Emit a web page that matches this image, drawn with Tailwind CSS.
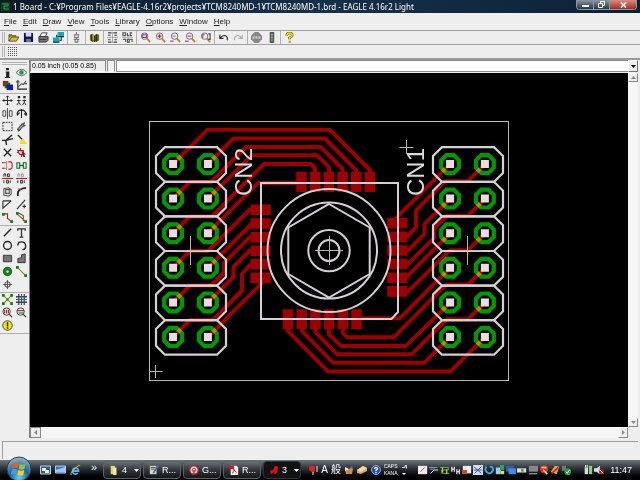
<!DOCTYPE html>
<html lang="en">
<head>
  <meta charset="UTF-8">
  <title>1 Board - EAGLE 4.16r2 Light</title>
  <script src="https://cdn.jsdelivr.net/npm/@tailwindcss/browser@4"></script>
</head>
<body class="h-screen flex flex-col overflow-hidden bg-[#eeeeee] text-black font-['Liberation_Sans','Noto_Sans_CJK_JP',sans-serif] text-[8px] leading-[10px]">

  <!-- Title bar -->
  <header class="h-[13px] shrink-0 flex items-center bg-linear-to-r from-[#0b1a28] via-[#16304a] to-[#0d2134] text-white pl-px pr-[3px]">
    <svg class="w-[9px] h-[9px] mr-[3px]" viewBox="0 0 9 9"><path fill="#0b3d1c" d="M0 0h9v9H0z"/><path fill="none" stroke="#2fa04a" d="M1 2h6v2H3v3h5"/></svg>
    <h1 class="flex-1 whitespace-nowrap font-['Noto_Sans','Noto_Sans_CJK_JP',sans-serif] text-[8px] leading-[12px]">1 Board - C:¥Program Files¥EAGLE-4.16r2¥projects¥TCM8240MD-1¥TCM8240MD-1.brd - EAGLE 4.16r2 Light</h1>
    <div class="flex self-start h-[10px] rounded-b-sm overflow-hidden border border-t-0 border-[#8d99a5]">
      <button aria-label="Minimize" class="w-4 bg-linear-to-b from-[#8b97a4] to-[#26384a] flex items-center justify-center"><span class="w-[7px] h-[2px] mt-[3px] bg-white"></span></button>
      <button aria-label="Restore" class="w-4 border-l border-[#8d99a5] bg-linear-to-b from-[#8b97a4] to-[#26384a] flex items-center justify-center"><svg class="w-[7px] h-[7px]" viewBox="0 0 7 7"><path fill="none" stroke="#fff" d="M2.500 2V.5h4v4H5M.5 2.500h4v4h-4z"/></svg></button>
      <button aria-label="Close" class="w-[27px] border-l border-[#8d99a5] bg-linear-to-b from-[#d98a7c] to-[#a82a18] flex items-center justify-center"><svg class="w-[7px] h-[6px]" viewBox="0 0 7 6"><path stroke="#fff" stroke-width="1.600" d="M1 .5l5 5M6 .5l-5 5"/></svg></button>
    </div>
  </header>

  <!-- Menu -->
  <nav class="h-[17px] shrink-0 flex items-center gap-[6px] px-1 text-[#222]">
    <button><u>F</u>ile</button>
    <button><u>E</u>dit</button>
    <button><u>D</u>raw</button>
    <button><u>V</u>iew</button>
    <button><u>T</u>ools</button>
    <button><u>L</u>ibrary</button>
    <button><u>O</u>ptions</button>
    <button><u>W</u>indow</button>
    <button><u>H</u>elp</button>
  </nav>

  <!-- Toolbars -->
  <div id="toolbar" class="h-[14px] shrink-0 flex items-center gap-px pl-[2px] border-t border-[#a0a0a0]">
    <span class="w-[3px] h-[11px] border-x border-[#b4b4b4]"></span>
  </div>
  <div class="h-[16px] shrink-0 flex items-center gap-[3px] pl-[2px] border-t border-b-2 border-t-[#a0a0a0] border-b-[#9a9a9a]">
    <span class="w-[3px] h-[11px] border-x border-[#b4b4b4]"></span>
    <button aria-label="Grid"><svg class="w-[9px] h-[9px]" viewBox="0 0 9 9"><path stroke="#555" stroke-dasharray="1 1" d="M0 .5h9M0 2.500h9M0 4.500h9M0 6.500h9M0 8.500h9"/></svg></button>
  </div>

  <main class="flex-1 min-h-0 flex">
    <!-- Tool palette -->
    <aside id="palette" class="w-[29px] shrink-0">
      <div class="h-[3px] mx-[2px] mt-[2px] mb-px border-y border-[#b4b4b4]"></div>
    </aside>

    <section class="flex-1 min-w-0 flex flex-col border-l border-[#808080] pr-[2px]">
      <div class="h-[13px] shrink-0 flex gap-px pb-px">
        <output class="w-[76px] border border-[#8c8c8c] border-b-white pl-px text-[7px] leading-[10px] whitespace-nowrap">0.05 inch (0.05 0.85)</output>
        <span class="w-2 border border-[#8c8c8c] border-b-white"></span>
        <input aria-label="Command" class="flex-1 min-w-0 bg-white border border-r-0 border-[#8c8c8c] outline-none px-px">
        <button aria-label="Command history" class="-ml-px w-[10px] bg-[#eeeeee] border border-t-white border-l-white border-[#777] flex items-center justify-center"><svg class="w-[5px] h-[3px]" viewBox="0 0 5 3"><path d="M0 0h5L2.500 3z"/></svg></button>
      </div>

      <div class="flex-1 min-h-0 flex">
        <!-- Board -->
        <svg role="img" aria-label="Board layout" class="flex-1 min-w-0 h-full bg-black" viewBox="30 73 598 354">
          <defs>
            <path id="ring" d="M-3.700 -8.900H3.700L8.900 -3.700V3.700L3.700 8.900H-3.700L-8.900 3.700V-3.700Z"/>
            <g id="rings"><use href="#ring" x="-17.400"/><use href="#ring" x="17.400"/></g>
            <path id="holes" d="M-21.400 -4h8v8h-8zM13.400 -4h8v8h-8z"/>
            <path id="cell" d="M-26 -17.300H26L35 -8.500V8.500L26 17.300H-26L-35 8.500V-8.500Z"/>
            <g id="ringColumn" fill="none" stroke="#009a00" stroke-width="4.200">
              <use href="#rings" x="190.500" y="164"/><use href="#rings" x="190.500" y="198.600"/><use href="#rings" x="190.500" y="233.200"/>
              <use href="#rings" x="190.500" y="267.800"/><use href="#rings" x="190.500" y="302.400"/><use href="#rings" x="190.500" y="337"/>
            </g>
            <g id="holeColumn" fill="#ecdcdf">
              <use href="#holes" x="190.500" y="164"/><use href="#holes" x="190.500" y="198.600"/><use href="#holes" x="190.500" y="233.200"/>
              <use href="#holes" x="190.500" y="267.800"/><use href="#holes" x="190.500" y="302.400"/><use href="#holes" x="190.500" y="337"/>
            </g>
            <g id="cellColumn">
              <use href="#cell" x="191" y="164.500"/><use href="#cell" x="191" y="199.100"/><use href="#cell" x="191" y="233.700"/>
              <use href="#cell" x="191" y="268.300"/><use href="#cell" x="191" y="302.900"/><use href="#cell" x="191" y="337.400"/>
            </g>
            <!-- half of the copper, the other half is the same turned by 180 degrees -->
            <g id="copper">
              <g fill="none" stroke="#9c0000" stroke-width="4" stroke-linejoin="round">
                <path d="M173 164L207.500 129.800H330L370 170v6"/>
                <path d="M208 164L233.500 138.500H325L356 170v6"/>
                <path d="M173 198.600L190 182H211L246 147H321L342.500 169v6"/>
                <path d="M208 198.600L252 155.300H317L329 167v8"/>
                <path d="M173 233.200L190 216.500H212L264 164H311L315 168v8"/>
                <path d="M208 233.200L258 183H300"/>
                <path d="M173 267.800L190 251H208L250 209.500h6"/>
                <path d="M208 267.800L252 223.500h5"/>
                <path d="M173 302.400L190 285.500H211L224 272.500V263L250 237h6"/>
                <path d="M208 302.400L233.500 277V267L250 250.500h6"/>
                <path d="M173 337L190 320H213L242 290.500V274L250 265h6"/>
                <path d="M208 337L267 278"/>
              </g>
              <path fill="#9c0000" d="M296.200 172h10.600v20h-10.600zM309.900 172h10.600v20h-10.600zM323.600 172h10.600v20h-10.600zM337.300 172h10.600v20h-10.600zM351 172h10.600v20h-10.600zM364.700 172h10.600v20h-10.600z
                M250.500 204.500h20.300v10.600h-20.300zM250.500 218.200h20.300v10.600h-20.300zM250.500 231.900h20.300v10.600h-20.300zM250.500 245.400h20.300v10.600h-20.300zM250.500 259h20.300v10.600h-20.300zM250.500 272.600h20.300v10.600h-20.300z"/>
            </g>
          </defs>

          <use href="#ringColumn"/>
          <use href="#ringColumn" x="277"/>
          <g class="mix-blend-screen">
            <use href="#copper"/>
            <use href="#copper" transform="rotate(180 329 250.600)"/>
          </g>
          <use href="#holeColumn"/>
          <use href="#holeColumn" x="277"/>

          <rect x="149.500" y="121.500" width="359" height="259" fill="none" stroke="#b8b8b8"/>
          <g fill="none" stroke="#d6d0d4" stroke-width="2.200">
            <use href="#cellColumn"/>
            <use href="#cellColumn" x="277"/>
            <path stroke-width="2" d="M261 183H398V312L391.500 319H261Z"/>
            <circle cx="329" cy="250.600" r="61.500" stroke-width="2"/>
            <circle cx="329" cy="250.600" r="48" stroke-width="2"/>
            <circle cx="329" cy="250.600" r="20.700" stroke-width="2"/>
            <circle cx="329" cy="250.600" r="10.500" stroke-width="2"/>
            <path stroke-width="2" d="M329 204L369.700 227.500V274L329 297.500L288.300 274V227.500Z"/>
          </g>
          <path fill="none" stroke="#b8b8b8" d="M190.500 236v29M177 250.500h28M467.500 236v29M454 250.500h28M329.500 236v29M315 250.500h28M406.500 140v14M399.500 147.500h14M155.500 365v13M149.500 371.500h13"/>
          <g fill="#dcdcdc" font-family="Liberation Sans, sans-serif" font-size="24">
            <text transform="translate(251.500 196) rotate(-90)">CN2</text>
            <text transform="translate(424 196) rotate(-90)">CN1</text>
          </g>
        </svg>
        <div class="w-[10px] shrink-0 bg-[#f6f6f6] flex flex-col justify-between">
          <button aria-label="Scroll up" class="h-[9px] bg-[#eeeeee] border border-t-white border-l-white border-[#888] flex items-center justify-center"><svg class="w-[5px] h-[3px]" viewBox="0 0 5 3"><path fill="#888" d="M0 3h5L2.500 0z"/></svg></button>
          <button aria-label="Scroll down" class="h-[9px] bg-[#eeeeee] border border-t-white border-l-white border-[#888] flex items-center justify-center"><svg class="w-[5px] h-[3px]" viewBox="0 0 5 3"><path fill="#888" d="M0 0h5L2.500 3z"/></svg></button>
        </div>
      </div>
      <div class="h-[11px] shrink-0 mr-[10px] bg-[#f6f6f6] flex justify-between">
        <button aria-label="Scroll left" class="w-[11px] bg-[#eeeeee] border border-[#888] flex items-center justify-center"><svg class="w-[3px] h-[5px]" viewBox="0 0 3 5"><path fill="#888" d="M3 0v5L0 2.500z"/></svg></button>
        <button aria-label="Scroll right" class="w-[10px] bg-[#eeeeee] border border-t-white border-l-white border-[#888] flex items-center justify-center"><svg class="w-[3px] h-[5px]" viewBox="0 0 3 5"><path fill="#888" d="M0 0v5L3 2.500z"/></svg></button>
      </div>
    </section>
  </main>

  <!-- Status line -->
  <div class="h-[22px] shrink-0 pt-[3px] px-[2px]"><div class="h-[18px] border-t border-l border-[#a0a0a0]"></div></div>

  <!-- Taskbar -->
  <footer class="h-[20px] shrink-0 flex items-center bg-linear-to-b from-[#70757a] via-[#22272c] via-50% to-black text-white text-[9px]">
    <button aria-label="Start" class="relative z-10 w-[26px] h-[26px] ml-[6px] -mt-[2px] shrink-0">
      <svg viewBox="0 0 26 26">
        <defs><radialGradient id="orb" cx=".5" cy=".85" r=".8"><stop offset="0" stop-color="#5fd0f5"/><stop offset=".5" stop-color="#1c629c"/><stop offset="1" stop-color="#8fb0c4"/></radialGradient></defs>
        <circle cx="13" cy="13" r="12" fill="url(#orb)" stroke="#26394a"/>
        <path fill="#ee5a24" d="M7 7.500q3-1.500 5.500 0L11.500 12.500q-2.500-1.300-5.500 0z"/><path fill="#8cc63c" d="M13.500 8q3 1.500 6 0L18.500 13q-3 1.500-6 0z"/>
        <path fill="#3fa0ea" d="M5.800 13.500q3-1.300 5.500 0L10.300 18.500q-2.500-1.500-5.500 0z"/><path fill="#fcc92e" d="M12.300 14q3 1.500 6 0L17.300 19q-3 1.500-6 0z"/>
      </svg>
    </button>
    <div class="flex items-center gap-1 ml-2">
      <button aria-label="Switch windows"><svg class="w-[11px] h-[10px]" viewBox="0 0 11 10"><path fill="#2f5d9b" stroke="#b8cfe6" d="M.5 1h10v8H.5z"/><path fill="#e8f1fa" d="M2 3h4v3H2zM5 5h4v3H5z"/></svg></button>
      <button aria-label="Show desktop"><svg class="w-[11px] h-[10px]" viewBox="0 0 11 10"><path fill="#3c78c8" stroke="#b8cfe6" d="M.5 1h10v7H.5z"/><path fill="#9fc4ee" d="M1 5l9-3v5H1z"/></svg></button>
      <button aria-label="Internet Explorer"><svg class="w-[11px] h-[11px]" viewBox="0 0 11 11"><path fill="none" stroke="#4bb4f0" stroke-width="1.800" d="M3 6h5.500a3 3 0 1 0-.7 2"/><path fill="none" stroke="#f0c440" d="M1 10Q0 8 5 3.500T10 1"/></svg></button>
    </div>
    <span class="w-3 ml-[10px] mb-[6px] text-[11px]">»</span>
    <div id="tasks" class="flex gap-[2px] h-[18px]"></div>
    <div class="flex-1 flex items-center gap-[3px] px-2 justify-between">
      <svg class="w-[9px] h-[11px]" viewBox="0 0 9 11"><path fill="#e02020" d="M0 2q3-3 6 0v4L4 8 0 5z"/><path stroke="#ddd" d="M4 7v3M8 1v6"/></svg>
      <span class="text-[10px]">A</span><span class="text-[10px]">般</span>
      <svg class="w-[10px] h-[10px]" viewBox="0 0 10 10"><path fill="#d88a38" d="M1 4h8L8 9H2z"/><path fill="#eee" d="M1 2l4 2-4 2z"/><path fill="#4b86d0" d="M5 4l3-3 1 3z"/></svg>
      <svg class="w-[10px] h-[10px]" viewBox="0 0 10 10"><path fill="#e2a860" d="M0 5l6-4 4 2v3L4 9 0 8z"/><path fill="#f4d8a8" d="M0 5l6-4 4 2-6 4z"/></svg>
      <svg class="w-[10px] h-[10px]" viewBox="0 0 10 10"><circle cx="5" cy="5" r="4.500" fill="#2448b0" stroke="#8fa8e8"/><path fill="none" stroke="#fff" stroke-width="1.300" d="M3.500 4q0-1.500 1.500-1.500T6.500 4Q6 5 5 5.300V6.200M5 7v1.300"/></svg>
      <span class="text-[5px] leading-[7px]">CAPS<br>KANA</span>
      <svg class="w-[6px] h-[12px]" viewBox="0 0 6 12"><path fill="none" stroke="#ddd" d="M1 3.500h3v-2h1.500v3"/><path fill="#fff" d="M1 9h4L3 11z"/></svg>
      <div id="tray" class="flex items-center gap-px ml-2"></div>
      <time class="text-[9px] ml-[3px]">11:47</time>
    </div>
  </footer>

  <script>
    // icon bodies are drawn on a 12x12 grid
    const line = (d, color = '#222', w = 1.2) => `<path fill="none" stroke="${color}" stroke-width="${w}" d="${d}"/>`;
    const fill = (d, color = '#222') => `<path fill="${color}" d="${d}"/>`;
    const lens = (inner, color = '#a03090') => `<circle cx="5" cy="4.500" r="3.500" fill="#f6eef6" stroke="#666"/>` + line(inner, color) + line('M7.500 7L11 11', '#b09028', 2);

    const toolbar = [
      [['Open', fill('M1 3h3l1 1h4v2H1z', '#a08a10') + fill('M1 10l2-5h9l-3 5z', '#d8c020') + line('M1 10V3h3l1 1h4M1 10h8l3-4.500H4z', '#333', .8)],
       ['Save', fill('M1 1h10v10H1z', '#101060') + fill('M3 1h6v4H3z', '#d8d8e8') + fill('M3.500 7.500h5V11h-5z', '#777')],
       ['Print', fill('M4 1h6L8 5H2z', '#fff') + fill('M1 5h10v4l-2 2H1z', '#777') + line('M4 1h6L8 5M4 1L2 5M1 5h10v4l-2 2H1zM2 8h7', '#222', .9)],
       ['CAM', fill('M5 0h7v5H5z', '#18a8b8') + fill('M0 6h7v5H0z', '#18a8b8') + line('M5 5h7M0 11h7M4 3v3M9 5v4H7', '#103050')]],
      [['Board', line('M6 0v3M3 3h6M4 3v3h4V3M6 6v2M3 8h6M4.500 8v3h3V8', '#777')]],
      [['Use library', fill('M1 3l3-1 2 2 2-2 3 1v6l-3 2-2-1-2 1-3-2z', '#6a6a10') + line('M3 3v7M6 4v7M8 3v7', '#222') + line('M4.500 3v6', '#d8d040')]],
      [['Script', line('M1 1h4M1 3.500h3M7 1h4M8 3.500h3M1 11h4M1 8.500h3M7 11h4M8 8.500h3', '#444') + line('M6 0v12M0 6h12', '#888', .7)],
       ['Run', line('M1 1h3v3H1zM6 1v3h2M11 1H9v3h2M1 8h3v3M6 8h2v3H6zM9 8h2v3', '#555') + line('M0 6h12', '#999', .7)]],
      [['Fit', lens('M3 3h4v3H3z')], ['Zoom in', lens('M3 4.500h4M5 2.500v4', '#c01050')], ['Zoom out', lens('M3 4.500h3', '#b060b0') + line('M0 10h4', '#a03090')],
       ['Redraw', lens('M3 4.500h4') + line('M0 10h4', '#a03090')], ['Select', lens('M3 6.500V3h2') + line('M9 2h2v6H9', '#444')]],
      [['Undo', line('M2 3v4h4M2.500 6.500Q5 3 8 4t2 5', '#222')], ['Redo', line('M10 3v4H6M9.500 6.500Q7 3 4 4T2 9', '#aaa')]],
      [['Stop', fill('M4 0h4l4 4v4l-4 4H4L0 8V4z', '#888') + line('M2 6h2M5 6h2M8 6h2', '#ccc', 2.500)],
       ['Go', fill('M4 0h5v12H4z', '#556055') + fill('M5.500 2h2v2h-2zM5.500 5h2v2h-2z', '#999') + fill('M5.500 8h2v2h-2z', '#6b9a6b')]],
      [['Help', line('M3 4q0-3 3-3t3 2.500Q9 5 6 6.500V8', '#5a5000', 2.800) + line('M3 4q0-3 3-3t3 2.500Q9 5 6 6.500V8', '#f0e010', 1.600) + fill('M5 9.500h2.500V12H5z', '#c0b010')]]
    ];

    const palette = [
      [['Info', fill('M4.500 1h3v2.500h-3zM4 5h4v6h1v1H3v-1h1.500V6H4z')], ['Show', fill('M0 6q6-7 12 0-6 7-12 0z', '#e8f0d0') + line('M0 6q6-7 12 0-6 7-12 0z', '#507040', 1) + '<circle cx="6" cy="6" r="2.400" fill="#109090"/>'],
       ['Display', fill('M1 1h6v6H1z', '#b01818') + fill('M3 3h6v6H3z', '#107018') + fill('M5 5h7v6H5z', '#1818a0')], ['Mark', line('M2 0v10h10', '#222') + line('M2 8l4-4 2 1 3-4M0 2h4M9 4h3', '#555')]],
      [['Move', line('M6 1v10M1 6h10M4.500 2.500L6 1l1.500 1.500M4.500 9.500L6 11l1.500-1.500M2.500 4.500L1 6l1.500 1.500M9.500 4.500L11 6 9.500 7.500', '#222', 1)], ['Copy', line('M3 5v3L1 11M3 8l2 3M1 6h4M9 5v3l-2 3M9 8l2 3M7 6h4', '#222', 1) + fill('M2 1h2.500v2.500H2zM8 1h2.500v2.500H8z')],
       ['Mirror', line('M4 3H1v6h3M8 3h3v6H8M6 0v12M4 3v6M8 3v6', '#444', 1)], ['Rotate', line('M1 7q1-5 5-5t5 5M6 1v10M4 5l-3 3M9 6l2 2 1-3', '#222', 1.200)],
       ['Group', '<path fill="none" stroke="#222" stroke-dasharray="2 1" d="M1 1.500h10v9H1z"/>'], ['Change', fill('M1 9l5-6 4-2-1 3 2 1-4 2-4 5z', '#444') + line('M3 9l5-5', '#aaa')],
       ['Cut', line('M11 1L4 7M12 5L4 7M4 7H0M4 7l1 5', '#222', 1.500)], ['Paste', line('M2 1l6 6', '#333', 1.500) + fill('M6 6l2-1 4 6H4z', '#f0e020')],
       ['Delete', line('M2 2l8 8M10 2l-8 8', '#222', 1.500)], ['Add', line('M2 4h6v4H4zM5 1v3M1 6h2M6 8v3', '#b02020') + fill('M6 4l5 4H9l1 3H8L7 9z', '#702020')],
       ['Pinswap', line('M4 3H0M4 9H0M7 2h2q2 0 2 2v4q0 2-2 2H7', '#b02020') + line('M5 1v10', '#d08080')], ['Gateswap', line('M4 6h4', '#107018', 1.500) + line('M1 3h3v6H1zM8 3h3v6H8z', '#107018', 1.200)],
       ['Name', line('M0 6h12', '#b02020') + line('M2 4V1h2v3M6 1h2v3H6zM2 8v3M5 8v3h2V8zM9 8v3', '#222', 1)], ['Value', line('M0 6h12', '#b02020') + line('M2 4V1h2v3M6 1h2v3H6z', '#999', 1) + line('M2 8v3M5 8v3h2V8zM9 8v3', '#222', 1)],
       ['Smash', line('M2 3l5-1 3 2v5l-3 2-5-1zM4 4h4v4H4z', '#555')], ['Miter', line('M2 11V8q0-5 9-6', '#222', 2) + line('M2 3h4', '#999')],
       ['Split', line('M1 2h9M1 2v8l9-8', '#333')], ['Optimize', line('M1 11L10 1M7 8h4M9 6v4', '#333', 1.200)],
       ['Route', line('M1 2h5v5l4 3', '#b02020') + fill('M0 1h3v3H0zM9 9h3v3H9z', '#108018')], ['Ripup', line('M1 2l9 8M3 1l5 3v6', '#806020') + fill('M0 0h3v3H0zM9 9h3v3H9z', '#108018')]],
      [['Wire', line('M2 10l8-8', '#222', 1.600)], ['Text', line('M2 4V2h8v2M6 2v9M4 11h4', '#333', 1.400)],
       ['Circle', '<circle cx="6" cy="6" r="4.300" fill="none" stroke="#222" stroke-width="1.500"/>'], ['Arc', line('M2 6q0-4 4-4t4.500 4T7 10.500', '#222', 1.500)],
       ['Rect', '<path fill="#777" stroke="#333" d="M1.500 2.500h9v7h-9z"/>'], ['Polygon', '<path fill="#777" stroke="#333" d="M2 10.500V6l4-1V2l4-1v9.500z"/>'],
       ['Via', '<circle cx="6" cy="6" r="3.300" fill="#c8d8c8" stroke="#108018" stroke-width="3.600"/>'], ['Signal', line('M2 2l8 8', '#a09020', 1.400) + fill('M0 0h3v3H0zM9 9h3v3H9z', '#108018')],
       ['Hole', '<circle cx="6" cy="6" r="3" fill="none" stroke="#333"/>' + line('M6 1v10M1 6h10', '#333', .8)]],
      [['Ratsnest', line('M2 2l8 8M10 2l-8 8', '#a09020') + fill('M0 0h3v3H0zM9 9h3v3H9zM9 0h3v3H9zM0 9h3v3H0zM5 5h2v2H5z', '#108018')], ['Auto', line('M3 0v12M9 0v12', '#b02060', 1.500) + line('M0 3h12M0 9h12', '#2040b0', 1.500) + line('M6 0v12M0 6h12', '#108018')],
       ['ERC', '<circle cx="5" cy="5" r="4" fill="#eee" stroke="#333"/>' + line('M3 3v4M5 3v4M7 3v4', '#b02020') + line('M8 8l3 3')], ['DRC', '<circle cx="5" cy="5" r="4" fill="#eee" stroke="#333"/>' + line('M1 4h8', '#b02020') + line('M3 6.500h5', '#108018') + line('M8 8l3 3')],
       ['Errors', '<circle cx="6" cy="6" r="5.200" fill="#f4e410" stroke="#444"/>' + line('M6 2.500v4.500M6 8v1.500', '#222', 1.600)]]
    ];

    const tasks = [
      ['4', fill('M2 1h5v10H2z', '#e8d070') + fill('M5 3h4v9H5z', '#f4e8a0'), true],
      ['R...', fill('M1 1h8v10H1z', '#e8d8b0') + line('M2 3h6M2 5h5', '#555') + line('M11 1L5 10', '#3070d0', 2), false],
      ['G...', '<circle cx="6" cy="6" r="5" fill="#f0e0e0" stroke="#c02030" stroke-width="1.500"/><circle cx="6" cy="6" r="2.200" fill="none" stroke="#c02030"/>' + line('M6 6v6', '#c02030', 1.500), false],
      ['R...', fill('M2 1h7l2 2v9H2z', '#f4f0f0') + fill('M0 1h6v4H0z', '#d01818') + line('M4 10q3-5 2-5t3 4', '#d01818'), false],
      ['3', fill('M1 7l4-1 2-5 4 1-1 7-3 2-2-2-3 2z', '#d81010'), true]
    ];

    const tray = [
      fill('M0 1h11v10H0z', '#eee') + line('M3 8l5-5', '#c05050'),
      line('M0 3h10M1 5h6', '#60a0c0') + line('M2 10l4-4h5', '#ddd'),
      line('M0 3h10v3H2v4h9', '#40b060') + line('M3 3v6M8 5v6', '#e0c040', 1.500),
      line('M1 2v6M4 2v6M1 5h3M7 5v6M10 5v6M7 8h3', '#e0e0e0', 1.500),
      fill('M1 1h10v9H1z', '#eee') + fill('M0 6h6v5H0z', '#d04040'),
      fill('M0 0h12v12H0z', '#cfe0f8') + line('M1 2l9 8M10 2L2 10M1 6h10', '#3050c8'),
      line('M3 2q-3 4 1 7t7-3q0-4-4-4', '#40a8e0', 2.200),
      fill('M1 3h6v8H1z', '#a8c8e8') + fill('M6 0h5v6H6z', '#30a060') + fill('M7 7h4v4H7z', '#e8d860'),
      fill('M0 1h9v7H0z', '#2860b8') + fill('M3 4h9v7H3z', '#4888d8'),
      fill('M0 4h11v5H0z', '#ddd') + fill('M5 5h3v3H5z', '#30a040'),
      fill('M1 1h11v7H1z', '#888') + line('M1 10.500h10', '#bbb'),
      '<circle cx="6" cy="5" r="5" fill="#e03020"/>' + line('M3 3h6M5 6l5 5', '#f8d8a0', 2),
      fill('M1 8l5-7 5 1-3 9z', '#e8b030') + line('M2 10L10 3', '#d02020', 2),
      fill('M1 1h5v6H1z', '#777') + '<circle cx="8" cy="8" r="4" fill="#28a038"/>' + line('M6 8l1.500 2L10 6', '#fff'),
      '',
      fill('M2 3h4v8H2z', '#ddd') + fill('M7 1h4v10H7z', '#8c8') + line('M3 0v3M5 0v3', '#fff'),
      fill('M0 4h3l4-3v10L3 8H0z', '#ddd') + '<circle cx="9" cy="8" r="3" fill="#c02020"/>' + line('M7 6l4 4', '#fff')
    ];

    const icon = (body, cls) => `<svg class="${cls}" viewBox="0 0 12 12">${body}</svg>`;

    document.getElementById('toolbar').innerHTML += toolbar.map(group =>
      group.map(([name, body]) => `<button aria-label="${name}" class="w-[14px] h-[12px] flex items-center justify-center">${icon(body, 'w-[11px] h-[11px]')}</button>`).join('')
    ).join('<span class="w-px h-[13px] ml-px bg-[#b0b0b0]"></span>');

    document.getElementById('palette').innerHTML += palette.map(group =>
      `<div class="grid grid-cols-2 justify-items-center pb-px border-b border-[#b0b0b0]">` +
      group.map(([name, body]) => `<button aria-label="${name}" class="w-[13px] h-[13px] flex items-center justify-center">${icon(body, 'w-[11px] h-[11px]')}</button>`).join('') + `</div>`
    ).join('');

    document.getElementById('tasks').innerHTML = tasks.map(([label, body, menu], i) =>
      `<button class="w-[38px] flex items-center gap-[3px] pl-[5px] rounded-sm border ${i === 4 ? 'border-[#30353a] bg-[#101214]' : 'border-[#5c6268] bg-linear-to-b from-[#6a7076] via-[#30363b] to-[#15181b]'}">
        ${icon(body, 'w-[10px] h-[10px] shrink-0')}<span class="flex-1 text-left">${label}</span>${menu ? '<svg class="w-[5px] h-[3px] mr-px" viewBox="0 0 5 3"><path fill="#fff" d="M0 0h5L2.500 3z"/></svg>' : ''}
      </button>`
    ).join('');

    document.getElementById('tray').innerHTML = tray.map(body => icon(body, 'w-[10px] h-[10px]')).join('');
  </script>
</body>
</html>
